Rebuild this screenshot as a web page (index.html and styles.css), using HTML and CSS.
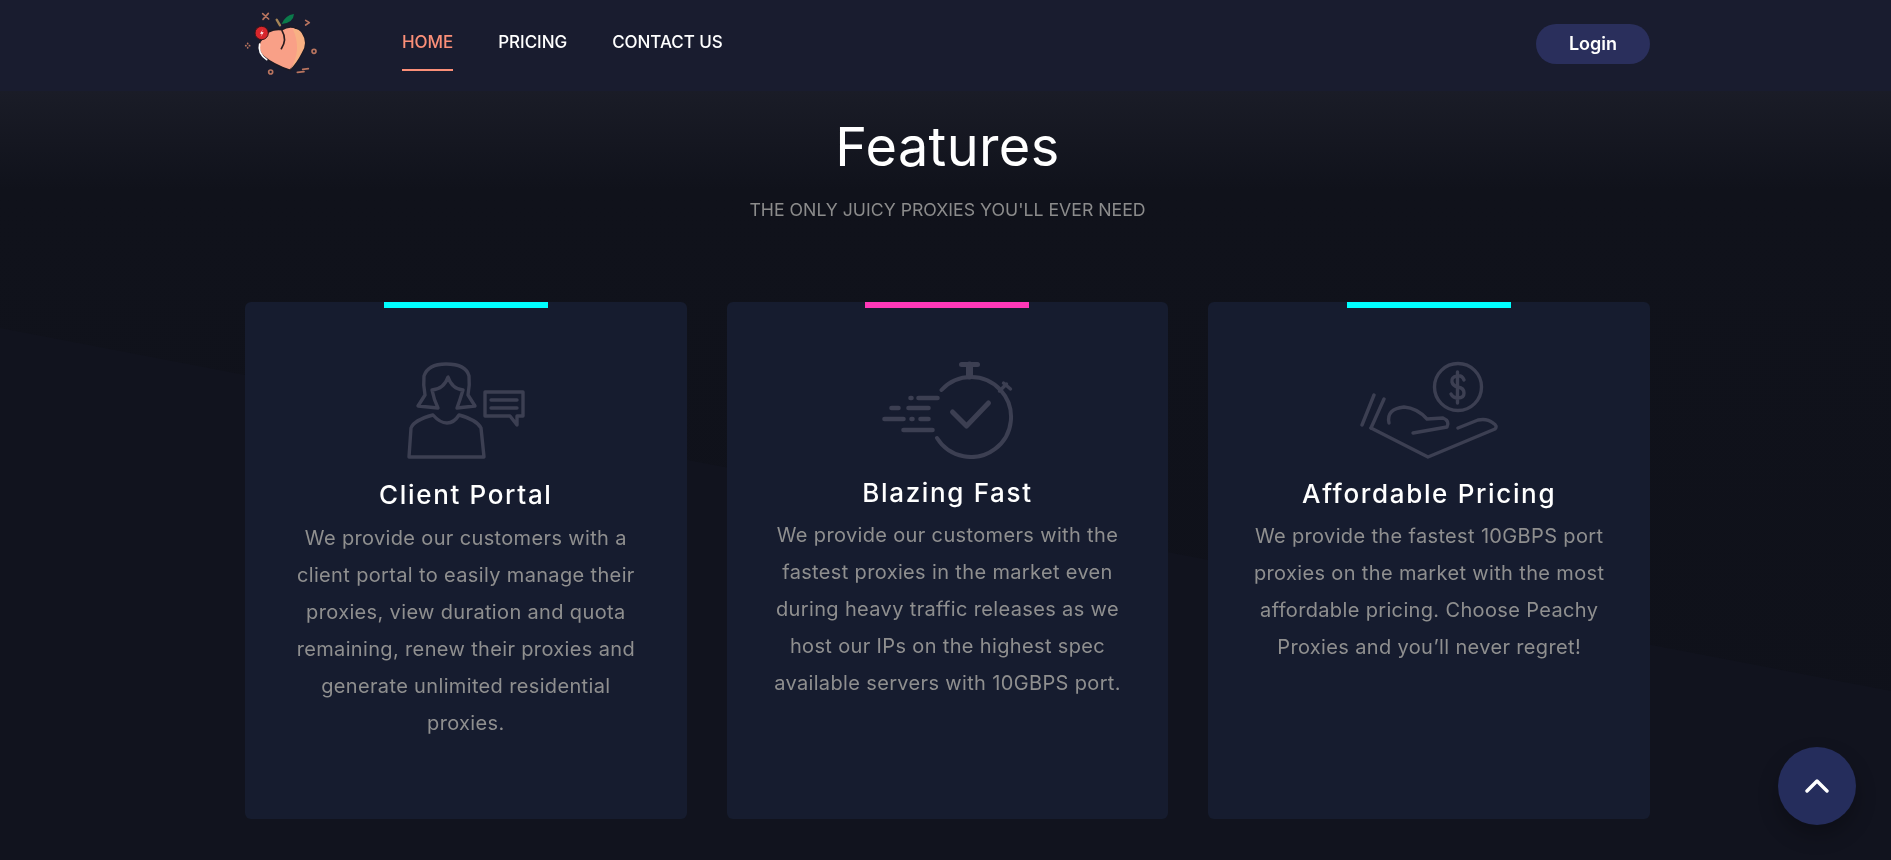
FILE: index.html
```html
<!DOCTYPE html>
<html lang="en">
<head>
<meta charset="utf-8">
<title>Peachy Proxies</title>
<link rel="stylesheet" href="styles.css">
</head>
<body>
<header class="site-header">
  <div class="container header-row">
    <a class="logo" href="#">
      <svg class="logo-svg" viewBox="0 0 240 216">
        <path d="M85 72 Q105 62 125 65 Q160 45 185 75 Q205 105 185 135 Q170 165 150 187 Q100 170 70 145 Q50 125 60 100 Z" fill="#f9a087" stroke="#1d1a24" stroke-width="5" stroke-linejoin="round"/>
        <path d="M158 62 Q178 62 185 75 Q205 105 185 135 Q170 165 150 185 Q188 125 158 62 Z" fill="#f8b184"/>
        <path d="M126 68 Q142 95 124 122" fill="none" stroke="#2a1c20" stroke-width="5" stroke-linecap="round"/>
        <path d="M59 108 Q52 135 80 155" fill="none" stroke="#fff" stroke-width="5" stroke-linecap="round"/>
        <path d="M125 48 Q135 22 162 18 Q160 45 125 48 Z" fill="#0b7a4b"/>
        <path d="M110 35 L120 52" stroke="#a58456" stroke-width="7" stroke-linecap="round"/>
        <circle cx="65" cy="75" r="20" fill="#d8262c" stroke="#3a1518" stroke-width="3"/>
        <path d="M69 64 L60 77 L66 77 L62 87 L71 73 L65 73 Z" fill="#fff"/>
        <g fill="none" stroke="#b8745f" stroke-width="5" stroke-linecap="round" stroke-linejoin="round">
          <path d="M68 17 L86 33 M85 16 L69 34"/>
          <path d="M197 37 L208 44 L197 51"/>
          <circle cx="222" cy="130" r="6"/>
          <circle cx="92" cy="192" r="6"/>
          <path d="M172 193 L192 191 M188 184 L205 182"/>
          <path d="M23 106 L23 107 M17 113 L18 113 M28 113 L29 113 M23 119 L23 120"/>
        </g>
      </svg>
    </a>
    <nav class="nav">
      <a class="nav-link is-active" href="#">HOME</a>
      <a class="nav-link" href="#">PRICING</a>
      <a class="nav-link" href="#">CONTACT US</a>
    </nav>
    <a class="login" href="#">Login</a>
  </div>
</header>
<main class="features">
  <div class="container">
    <h1 class="heading">Features</h1>
    <p class="subheading">THE ONLY JUICY PROXIES YOU'LL EVER NEED</p>
    <div class="cards">
      <article class="card">
        <span class="bar bar-cyan"></span>
        <svg class="icon icon-a" viewBox="1 0 170 130">
          <g fill="none" stroke-linecap="round" stroke-linejoin="round">
            <path d="M38 66 L45 55 Q43 45 44 36 Q48 24 66 24 Q86 24 89 36 Q90 45 88 55 L95 66 L77 68 Q80 60 83 50 Q72 49 68 37 Q64 49 52 50 Q54 60 58 68 Z"/>
            <path d="M29 117 L31 88 Q34 80 53 75 Q60 83 67 83 Q74 83 79 75 Q97 80 101 88 L104 117 Z"/>
            <path d="M105 52 H143 V76 H137 V85 L130 76 H105 Z"/>
            <path d="M111 60 H137 M111 68 H137"/>
          </g>
        </svg>
        <h2 class="card-title">Client Portal</h2>
        <p class="card-text">We provide our customers with a client portal to easily manage their proxies, view duration and quota remaining, renew their proxies and generate unlimited residential proxies.</p>
      </article>
      <article class="card">
        <span class="bar bar-pink"></span>
        <svg class="icon icon-b" viewBox="2.5 0 170 128">
          <g fill="none" stroke-linecap="round" stroke-linejoin="round">
            <path class="dial" d="M82 50 A40 40 0 1 1 77.500 98"/>
            <path class="knob" d="M102 24.500 H118"/>
            <path class="stem" d="M110 25 V36"/>
            <path d="M140 51 L147 44 M144 43 L151 49"/>
            <path class="check" d="M93 72 L107 86 L129 63"/>
            <path class="speed" d="M51 58 H52 M59 58 H78 M32 68 H39 M49 68 H69 M25 79 H44 M52 79 H53 M61 79 H69 M44 90 H73"/>
          </g>
        </svg>
        <h2 class="card-title">Blazing Fast</h2>
        <p class="card-text card-text-tight">We provide our customers with the fastest proxies in the market even during heavy traffic releases as we host our IPs on the highest spec available servers with 10GBPS port.</p>
      </article>
      <article class="card">
        <span class="bar bar-cyan"></span>
        <svg class="icon icon-c" viewBox="4 0 170 129">
          <g fill="none" stroke-linecap="round" stroke-linejoin="round">
            <circle cx="118" cy="47" r="23.500"/>
            <path d="M124 40 Q122 35 117 36 Q111 37 112 42 Q113 46 118 47 Q124 48 124 53 Q124 58 118 58 Q113 58 111 54 M117.500 32 V63"/>
            <path d="M34 55 L22 85 M44 59 L31 88"/>
            <path d="M31 88 L88 117 L155 89 Q158 86 153 83 Q147 78 138 80 L118 88"/>
            <path d="M49 83 Q46 69 64 67 Q77 68 87 79 L103 78 Q110 81 107 87 L73 93"/>
          </g>
        </svg>
        <h2 class="card-title">Affordable Pricing</h2>
        <p class="card-text card-text-tight">We provide the fastest 10GBPS port proxies on the market with the most affordable pricing. Choose Peachy Proxies and you’ll never regret!</p>
      </article>
    </div>
  </div>
</main>
<a class="to-top" href="#">
  <svg class="to-top-icon" viewBox="0 0 24 14"><path d="M2 12 L12 2 L22 12"/></svg>
</a>
</body>
</html>
```
FILE: styles.css
```css
* { box-sizing: border-box; }
html, body { height: 100%; }
body {
  margin: 0;
  padding-left: 4px;
  overflow: hidden;
  font-family: Inter, "Liberation Sans", sans-serif;
  color: #fff;
  background: linear-gradient(180deg, #1a1c27 91px, #10121b 190px, #0f111a 100%);
}
body::before {
  content: "";
  position: fixed;
  inset: 0;
  z-index: -1;
  background: #11131e;
  clip-path: polygon(0 328px, 100% 691px, 100% 100%, 0 100%);
}
a { text-decoration: none; color: inherit; }
.container { width: 1405px; margin: 0 auto; }
.site-header { height: 91px; margin-left: -4px; background: #191c2f; padding-left: 4px; }
.header-row { display: flex; align-items: flex-start; height: 100%; }
.logo { display: block; margin: 8px 0 0 -5px; width: 80px; height: 72px; flex: none; }
.logo-svg { display: block; width: 80px; height: 72px; filter: blur(0.3px); }
.nav { display: flex; gap: 45px; margin-left: 82px; }
.nav-link {
  display: block;
  height: 71px;
  padding-top: 32px;
  font-size: 17px;
  line-height: 21px;
  font-weight: 500;
  letter-spacing: -0.05px;
  border-bottom: 2px solid transparent;
}
.nav-link.is-active { color: #fb8f78; border-bottom-color: #fb8f78; }
.login {
  margin-left: auto;
  margin-top: 24px;
  width: 114px;
  height: 40px;
  border-radius: 20px;
  background: #2a2f5c;
  text-align: center;
  font-size: 18px;
  line-height: 39px;
  font-weight: 600;
}
.heading {
  margin: 17px 0 0;
  text-align: center;
  font-size: 54px;
  line-height: 78px;
  font-weight: 400;
  letter-spacing: 0.4px;
}
.subheading {
  margin: 10px 0 0;
  text-align: center;
  font-size: 17.7px;
  line-height: 27px;
  color: #8c8c8c;
}
.cards {
  display: grid;
  grid-template-columns: repeat(3, 1fr);
  gap: 40px;
  margin-top: 79px;
}
.card {
  height: 517px;
  background: #161c2f;
  border-radius: 6px;
  display: flex;
  flex-direction: column;
  align-items: center;
  padding: 0 42px;
}
.bar { width: 164px; height: 6px; flex: none; }
.bar-cyan { background: #00ffff; }
.bar-pink { background: #ff38b8; }
.icon { display: block; width: 170px; margin-top: 32px; flex: none; filter: blur(0.4px); }
.icon-a { height: 130px; }
.icon-b { height: 128px; }
.icon-c { height: 129px; }
.icon g { stroke: #3c3f52; stroke-width: 3.4; }
.icon .speed { stroke-width: 4.6; }
.icon .dial { stroke-width: 4; }
.icon .knob { stroke-width: 5; }
.icon .stem { stroke-width: 7; }
.icon .check { stroke-width: 5; }
.card-title {
  margin: 9px 0 0;
  font-size: 26px;
  line-height: 32px;
  font-weight: 500;
  letter-spacing: 1.66px;
  text-align: center;
}
.card-text {
  margin: 9px 0 0;
  font-size: 20px;
  line-height: 37px;
  letter-spacing: 0.35px;
  color: #8f8f8f;
  text-align: center;
}
.card-text-tight { margin-top: 8px; }
.to-top {
  position: fixed;
  left: 1778px;
  top: 747px;
  width: 78px;
  height: 78px;
  border-radius: 50%;
  background: #252d5c;
  box-shadow: 0 10px 20px rgba(0, 0, 0, 0.25);
  display: flex;
  align-items: center;
  justify-content: center;
}
.to-top-icon { width: 24px; height: 14px; display: block; }
.to-top-icon path { fill: none; stroke: #fff; stroke-width: 3.4; stroke-linecap: round; stroke-linejoin: round; }
```
